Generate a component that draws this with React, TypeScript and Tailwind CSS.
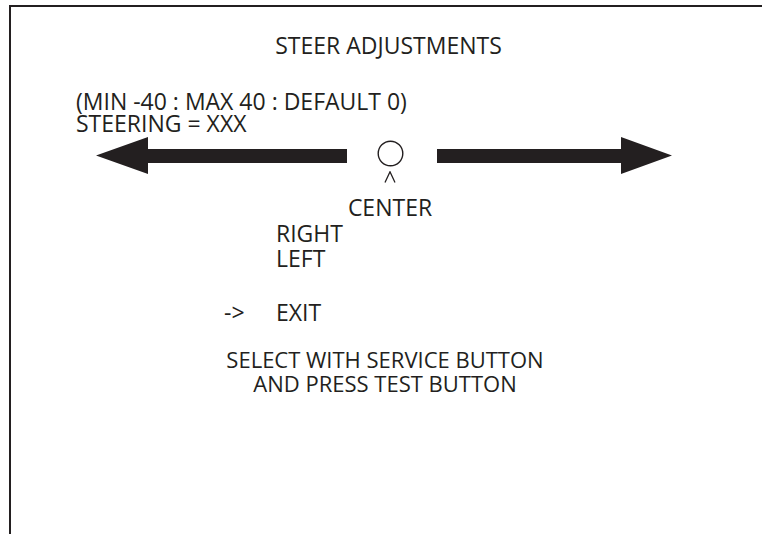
import React from "react";

const ink = "#231f20";

const LeftArrow = () => (
  <svg width="251" height="37" viewBox="0 0 251 37" className="shrink-0">
    <polygon points="0,18.5 52,0 52,12 251,12 251,26 52,26 52,37" fill={ink} />
  </svg>
);

const RightArrow = () => (
  <svg width="235" height="37" viewBox="0 0 235 37" className="shrink-0">
    <polygon points="0,12 184,12 184,0 235,18.5 184,37 184,26 0,26" fill={ink} />
  </svg>
);

const App = () => {
  return (
    <div className="w-[762px] h-[534px] bg-white overflow-hidden flex flex-col">
      <div
        className="ml-[9px] mt-[5px] flex-1 border-l-2 border-t-2 border-[#231f20] text-[#231f20] text-[23px] flex flex-col"
        style={{ fontFamily: '"Open Sans", "Liberation Sans", sans-serif' }}
      >
        {/* title */}
        <div className="mt-[26px] h-6 leading-6 text-center pl-[4px]">STEER ADJUSTMENTS</div>

        {/* range + value */}
        <div className="mt-[33px] pl-[65px] leading-[22px]">
          <div>(MIN -40 : MAX 40 : DEFAULT 0)</div>
          <div>STEERING = XXX</div>
        </div>

        {/* arrows + center marker */}
        <div className="mt-[3px] pl-[85px] flex items-start">
          <LeftArrow />
          <div className="w-[90px] pr-[4px] flex flex-col items-center">
            <svg width="27" height="27" viewBox="0 0 27 27" className="mt-[3px]">
              <circle cx="13.5" cy="13.5" r="12.3" fill="none" stroke={ink} strokeWidth="1.4" />
            </svg>
            <svg width="12" height="12" viewBox="0 0 12 12" className="mt-[4px]">
              <polyline points="1,11.5 6,0.8 11,11.5" fill="none" stroke={ink} strokeWidth="1.3" />
            </svg>
            <div className="mt-[12px] h-6 leading-6 whitespace-nowrap">CENTER</div>
          </div>
          <RightArrow />
        </div>

        {/* options */}
        <div className="mt-[2px] pl-[265px] leading-[25px]">
          <div>RIGHT</div>
          <div>LEFT</div>
        </div>
        <div className="mt-[29px] flex leading-[25px]">
          <div className="w-[265px] pl-[213px]">-&gt;</div>
          <div>EXIT</div>
        </div>

        {/* help */}
        <div className="mt-[22px] leading-6 text-center text-[22px] pr-[3px]">
          <div>SELECT WITH SERVICE BUTTON</div>
          <div>AND PRESS TEST BUTTON</div>
        </div>
      </div>
    </div>
  );
};

export default App;
